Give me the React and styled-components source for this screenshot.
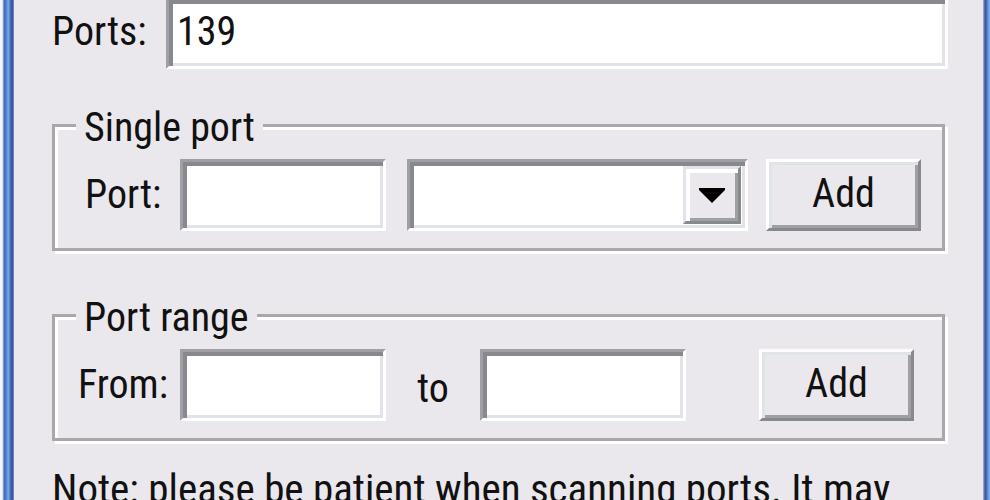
import React from "react";
import styled, { createGlobalStyle } from "styled-components";

const face = "#eae8ed";
const outerShade = "#a09fa5";
const innerShade = "#88898e";
const softLight = "#e0e4e9";

const GlobalStyle = createGlobalStyle`
  *, *::before, *::after { box-sizing: border-box; }
  body { margin: 0; background: ${face}; overflow: hidden; }
  body, input, select, button {
    font-family: "Roboto Condensed", Roboto, "Liberation Sans", sans-serif;
    font-size: 40px;
    line-height: 48px;
    color: #111;
  }
`;

const Frame = styled.div`
  display: grid;
  grid-template-columns: 14px minmax(0, 1fr) 7px;
  height: 100vh;
  overflow: hidden;
`;

const LeftEdge = styled.div`
  background: linear-gradient(
    to right,
    #f4f4fb 0 2px, #bcc6e6 3px, #4169bd 4px, #4a78c8 6px,
    #78a8e0 8px, #6c9bd8 9px, #3c5ba8 11px, #3b55a0 13px, #a9b0d2 14px
  );
`;

const RightEdge = styled.div`
  background: linear-gradient(
    to right,
    #b5b9d6 0, #3b55a0 2px, #3d5cab 3px, #6796d6 5px, #7fb0e6 7px
  );
`;

const Body = styled.main`
  padding: 0 38px;
`;

const PortsRow = styled.div`
  display: flex;
  align-items: center;
  margin-right: -3px;
`;

const Label = styled.label`
  flex: none;
  width: ${(p) => p.$width}px;
  white-space: nowrap;
`;

const Field = styled.input`
  min-width: 0;
  width: 206px;
  height: 72px;
  padding: 0 8px;
  border: 3px solid;
  border-color: ${outerShade} #fff #fff ${outerShade};
  border-radius: 0;
  outline: none;
  background: #fff;
  box-shadow: inset 4px 4px ${innerShade}, inset -3px -3px ${softLight};
`;

const PortsField = styled(Field)`
  flex: 1;
  height: 69px;
  border-top: 0;
  padding-bottom: 4px;
`;

const PortsLabel = styled(Label)`
  padding-bottom: 6px;
`;

const Group = styled.fieldset`
  min-width: 0;
  margin: ${(p) => p.$above}px 0 0;
  padding: 0 ${(p) => p.$right}px 17px ${(p) => p.$left}px;
  border: 3px solid #a8a7ac;
  box-shadow: 3px 3px #fff, inset 3px 3px #fff;
`;

const Legend = styled.legend`
  margin-left: ${(p) => p.$shift}px;
  padding: 6px 8px 0;
  background: ${face};
`;

const Row = styled.div`
  display: flex;
  align-items: center;
  margin-top: 7px;
`;

const Combo = styled.div`
  display: grid;
  grid-template-columns: minmax(0, 1fr) 58px;
  flex: 1;
  height: 72px;
  margin: 0 18px 0 21px;
  padding: 4px;
  border: 3px solid;
  border-color: ${outerShade} #fff #fff ${outerShade};
  background: #fff;
  box-shadow: inset 4px 4px ${innerShade}, inset -3px -3px ${softLight};
`;

const Select = styled.select`
  grid-area: 1 / 1 / 2 / 3;
  appearance: none;
  border: 0;
  outline: none;
  padding: 0 62px 0 4px;
  background: transparent;
`;

const DropButton = styled.span`
  grid-area: 1 / 2;
  display: grid;
  place-items: center;
  pointer-events: none;
  border: 3px solid;
  border-color: ${softLight} ${innerShade} ${innerShade} ${softLight};
  background: ${face};
  box-shadow: inset 4px 4px #fff, inset -3px -3px ${outerShade};
`;

const Button = styled.button`
  flex: none;
  width: 155px;
  height: 72px;
  padding: 0 0 2px;
  border: 3px solid;
  border-color: #fff ${innerShade} ${innerShade} #fff;
  border-radius: 0;
  background: ${face};
  box-shadow: inset 3px 3px ${softLight}, inset -3px -3px ${outerShade};
`;

const To = styled.label`
  width: 94px;
  padding-top: 8px;
  text-align: center;
`;

const RangeButton = styled(Button)`
  margin-left: auto;
`;

const Note = styled.p`
  margin: 24px 0 0;
  font-size: 41px;
  white-space: nowrap;
`;

export default function App() {
  return (
    <>
      <GlobalStyle />
      <Frame>
        <LeftEdge />
        <Body>
          <PortsRow>
            <PortsLabel htmlFor="ports" $width={114}>Ports:</PortsLabel>
            <PortsField id="ports" type="text" defaultValue="139" />
          </PortsRow>

          <Group $above={29} $left={30} $right={21}>
            <Legend $shift={-9}>Single port</Legend>
            <Row>
              <Label htmlFor="port" $width={95}>Port:</Label>
              <Field id="port" type="text" />
              <Combo>
                <Select aria-label="Known ports" defaultValue="">
                  <option value="" />
                </Select>
                <DropButton>
                  <svg width="26" height="16" viewBox="0 0 26 16" aria-hidden="true">
                    <path d="M0 1h26v2L15 14l-2 2-2-2L0 3z" fill="#000" />
                  </svg>
                </DropButton>
              </Combo>
              <Button type="button">Add</Button>
            </Row>
          </Group>

          <Group $above={37} $left={23} $right={28}>
            <Legend $shift={-2}>Port range</Legend>
            <Row>
              <Label htmlFor="from" $width={102}>From:</Label>
              <Field id="from" type="text" />
              <To htmlFor="to">to</To>
              <Field id="to" type="text" />
              <RangeButton type="button">Add</RangeButton>
            </Row>
          </Group>

          <Note>Note: please be patient when scanning ports. It may</Note>
        </Body>
        <RightEdge />
      </Frame>
    </>
  );
}
